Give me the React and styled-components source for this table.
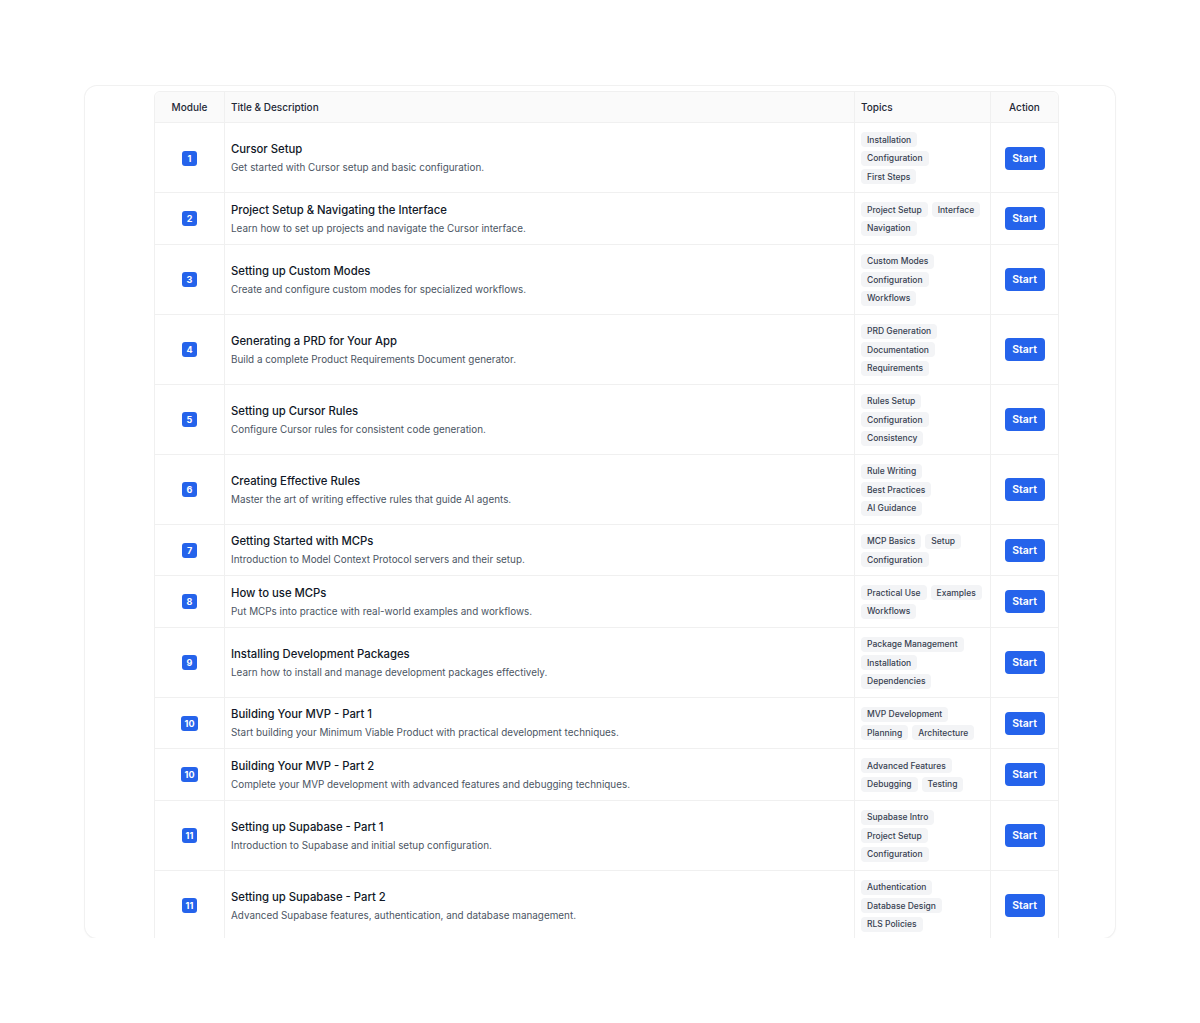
import React from 'react'
import styled, { createGlobalStyle } from 'styled-components';

const GlobalStyle = createGlobalStyle`
  body {
    margin: 0;
    background: #ffffff;
    font-family: Inter, "Noto Sans", "Liberation Sans", sans-serif;
    color: #111827;
  }
`;

const Page = styled.div`
  padding: 86px 0 0 85px;
`;

const Card = styled.div`
  width: 1030px;
  height: 852px;
  box-sizing: border-box;
  padding: 5px 56px 0 69px;
  border-radius: 12px;
  box-shadow: 0 0 0 1px #f1f1f1, 0 1px 3px rgba(0, 0, 0, 0.05);
  overflow: hidden;
`;

const Table = styled.table`
  width: 905px;
  border-collapse: separate;
  border-spacing: 0;
  table-layout: fixed;
  border: 1px solid #f0f0f0;
  border-radius: 6px 6px 0 0;
`;

const Th = styled.th`
  height: 30px;
  padding: 0 6px;
  background: #fafafa;
  font-size: 10px;
  font-weight: 500;
  color: #1f2937;
  text-align: ${p => p.$align || 'left'};
  border-left: ${p => (p.$first ? 'none' : '1px solid #f0f0f0')};
  border-bottom: 1px solid #f0f0f0;
  &:first-child { border-top-left-radius: 6px; }
  &:last-child { border-top-right-radius: 6px; }
`;

const Td = styled.td`
  padding: 9px 6px 8px;
  vertical-align: middle;
  border-left: ${p => (p.$first ? 'none' : '1px solid #f0f0f0')};
  border-bottom: 1px solid #f0f0f0;
`;

const Center = styled.div`
  display: flex;
  justify-content: center;
  align-items: center;
`;

const Badge = styled.span`
  display: inline-flex;
  align-items: center;
  justify-content: center;
  min-width: 15px;
  height: 15px;
  padding: 0 4px;
  box-sizing: border-box;
  border-radius: 3px;
  background: #2563eb;
  color: #fff;
  font-size: 9px;
  font-weight: 700;
`;

const Title = styled.div`
  font-size: 11.3px;
  font-weight: 500;
  color: #111827;
  line-height: 15px;
  margin-bottom: 3px;
`;

const Desc = styled.div`
  font-size: 9.9px;
  color: #4b5563;
  line-height: 14px;
`;

const Tags = styled.div`
  display: flex;
  flex-wrap: wrap;
  gap: 3.5px 4px;
`;

const Tag = styled.span`
  display: inline-flex;
  align-items: center;
  height: 15px;
  padding: 0 6px;
  border-radius: 4px;
  background: #f3f4f6;
  color: #374151;
  font-size: 8.5px;
  font-weight: 500;
`;

const StartButton = styled.button`
  width: 40px;
  height: 23px;
  border: none;
  border-radius: 4px;
  background: #2563eb;
  color: #fff;
  font-family: inherit;
  font-size: 10.5px;
  font-weight: 600;
  cursor: pointer;
`;

const modules = [
  { n: 1, title: 'Cursor Setup', desc: 'Get started with Cursor setup and basic configuration.', tags: ['Installation', 'Configuration', 'First Steps'] },
  { n: 2, title: 'Project Setup & Navigating the Interface', desc: 'Learn how to set up projects and navigate the Cursor interface.', tags: ['Project Setup', 'Interface', 'Navigation'] },
  { n: 3, title: 'Setting up Custom Modes', desc: 'Create and configure custom modes for specialized workflows.', tags: ['Custom Modes', 'Configuration', 'Workflows'] },
  { n: 4, title: 'Generating a PRD for Your App', desc: 'Build a complete Product Requirements Document generator.', tags: ['PRD Generation', 'Documentation', 'Requirements'] },
  { n: 5, title: 'Setting up Cursor Rules', desc: 'Configure Cursor rules for consistent code generation.', tags: ['Rules Setup', 'Configuration', 'Consistency'] },
  { n: 6, title: 'Creating Effective Rules', desc: 'Master the art of writing effective rules that guide AI agents.', tags: ['Rule Writing', 'Best Practices', 'AI Guidance'] },
  { n: 7, title: 'Getting Started with MCPs', desc: 'Introduction to Model Context Protocol servers and their setup.', tags: ['MCP Basics', 'Setup', 'Configuration'] },
  { n: 8, title: 'How to use MCPs', desc: 'Put MCPs into practice with real-world examples and workflows.', tags: ['Practical Use', 'Examples', 'Workflows'] },
  { n: 9, title: 'Installing Development Packages', desc: 'Learn how to install and manage development packages effectively.', tags: ['Package Management', 'Installation', 'Dependencies'] },
  { n: 10, title: 'Building Your MVP - Part 1', desc: 'Start building your Minimum Viable Product with practical development techniques.', tags: ['MVP Development', 'Planning', 'Architecture'] },
  { n: 10, title: 'Building Your MVP - Part 2', desc: 'Complete your MVP development with advanced features and debugging techniques.', tags: ['Advanced Features', 'Debugging', 'Testing'] },
  { n: 11, title: 'Setting up Supabase - Part 1', desc: 'Introduction to Supabase and initial setup configuration.', tags: ['Supabase Intro', 'Project Setup', 'Configuration'] },
  { n: 11, title: 'Setting up Supabase - Part 2', desc: 'Advanced Supabase features, authentication, and database management.', tags: ['Authentication', 'Database Design', 'RLS Policies'] },
];

const App = () => {
  return (
    <Page>
      <GlobalStyle />
      <Card>
        <Table>
          <colgroup>
            <col style={{ width: 69 }} />
            <col style={{ width: 630 }} />
            <col style={{ width: 136 }} />
            <col style={{ width: 68 }} />
          </colgroup>
          <thead>
            <tr>
              <Th $first $align="center">Module</Th>
              <Th>Title &amp; Description</Th>
              <Th>Topics</Th>
              <Th $align="center">Action</Th>
            </tr>
          </thead>
          <tbody>
            {modules.map((m, i) => (
              <tr key={i}>
                <Td $first><Center><Badge>{m.n}</Badge></Center></Td>
                <Td>
                  <Title>{m.title}</Title>
                  <Desc>{m.desc}</Desc>
                </Td>
                <Td>
                  <Tags>
                    {m.tags.map(t => <Tag key={t}>{t}</Tag>)}
                  </Tags>
                </Td>
                <Td><Center><StartButton>Start</StartButton></Center></Td>
              </tr>
            ))}
          </tbody>
        </Table>
      </Card>
    </Page>
  )
}

export default App
